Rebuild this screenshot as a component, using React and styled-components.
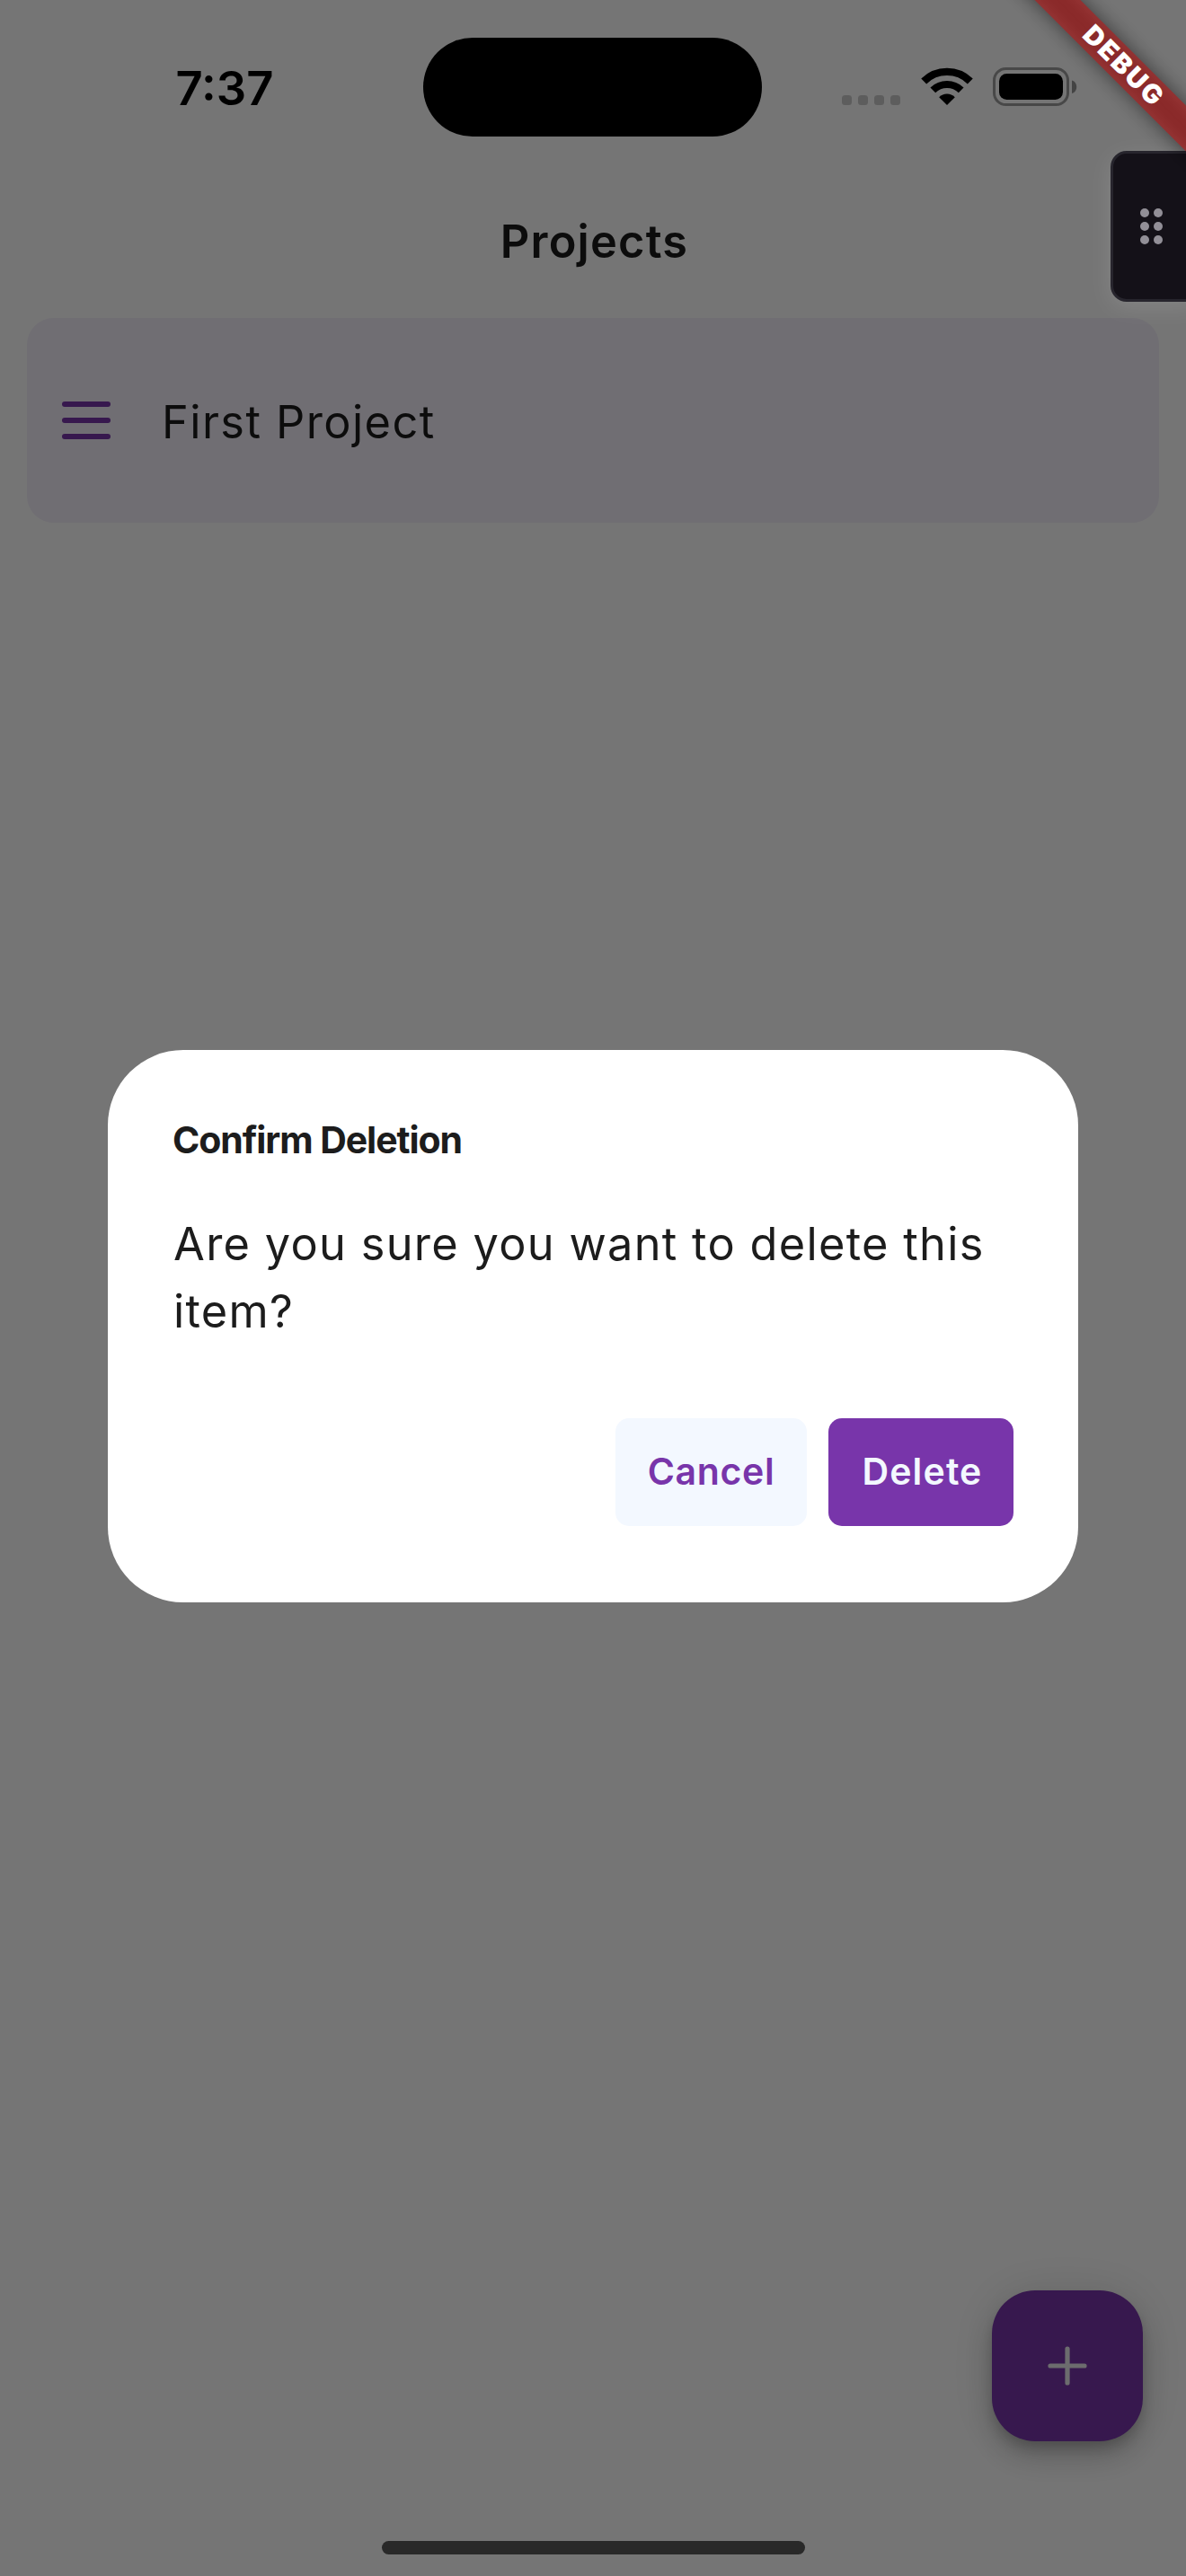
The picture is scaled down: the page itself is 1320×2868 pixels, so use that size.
import React from "react";
import styled, { createGlobalStyle } from "styled-components";

const GlobalStyle = createGlobalStyle`
  * { box-sizing: border-box; }
  body {
    margin: 0;
    background: #fff;
    font-family: Inter, "Liberation Sans", sans-serif;
    color: #1c1c1c;
  }
  button { font: inherit; border: 0; padding: 0; }
`;

const Screen = styled.main`
  position: relative;
  display: flex;
  flex-direction: column;
  width: 1320px;
  height: 2868px;
  overflow: hidden;
  background: #fff;
`;

const StatusSpacer = styled.div`
  height: 186px;
  flex: none;
`;

const AppBar = styled.header`
  display: flex;
  align-items: center;
  justify-content: center;
  height: 168px;
  padding: 0 0 3px 3px;
  flex: none;
`;

const AppTitle = styled.h1`
  margin: 0;
  font-size: 50.5px;
  font-weight: 600;
  line-height: 66px;
  letter-spacing: 1.2px;
`;

const ProjectList = styled.section`
  flex: 1;
  padding: 0 30px;
`;

const ProjectRow = styled.article`
  display: flex;
  align-items: center;
  gap: 57px;
  height: 228px;
  padding: 0 39px;
  border-radius: 30px;
  background: #f3effa;
`;

const MenuIcon = styled.span`
  display: flex;
  flex-direction: column;
  gap: 12px;
  width: 54px;
`;

const MenuBar = styled.i`
  height: 6px;
  border-radius: 3px;
  background: #7835aa;
`;

const ProjectName = styled.span`
  padding-top: 3px;
  font-size: 50.5px;
  line-height: 72px;
  letter-spacing: 1.42px;
`;

const BottomBar = styled.footer`
  display: flex;
  justify-content: flex-end;
  padding: 0 48px 150px;
`;

const AddButton = styled.button`
  display: grid;
  place-items: center;
  width: 168px;
  height: 168px;
  border-radius: 48px;
  background: #7835aa;
  color: #ececf0;
  box-shadow:
    0 9px 15px -3px rgba(0, 0, 0, 0.2),
    0 18px 30px rgba(0, 0, 0, 0.14),
    0 3px 54px rgba(0, 0, 0, 0.12);
`;

const Scrim = styled.div`
  position: absolute;
  inset: 0;
  display: flex;
  align-items: center;
  justify-content: center;
  padding-top: 84px;
  background: rgba(0, 0, 0, 0.54);
`;

const Dialog = styled.section`
  width: 1080px;
  height: 615px;
  padding: 72px 72px 0;
  border-radius: 84px;
  background: #fff;
`;

const DialogTitle = styled.h2`
  margin: 0 0 50.5px;
  font-size: 41px;
  font-weight: 700;
  line-height: 56px;
  letter-spacing: -1.08px;
`;

const DialogText = styled.p`
  margin: 0;
  padding-left: 1px;
  font-size: 50.5px;
  line-height: 75px;
  letter-spacing: 1.29px;
`;

const Actions = styled.div`
  display: flex;
  justify-content: flex-end;
  gap: 24px;
  margin-top: 82.3px;
`;

const ActionButton = styled.button`
  width: ${(p) => p.$width}px;
  height: 120px;
  padding: 0 0 3px ${(p) => (p.$primary ? 3 : 0)}px;
  border-radius: 15px;
  background: ${(p) => (p.$primary ? "#7835aa" : "#f3f8ff")};
  color: ${(p) => (p.$primary ? "#f3f8ff" : "#7835aa")};
  font-size: 41px;
  font-weight: 600;
  letter-spacing: ${(p) => (p.$primary ? 1.15 : 0.65)}px;
`;

const StatusBar = styled.div`
  position: absolute;
  inset: 0 0 auto;
  display: grid;
  grid-template-columns: 471px 377px 1fr;
  align-items: center;
  height: 194px;
  color: #000;
`;

const Clock = styled.time`
  padding: 1px 0 0 29px;
  text-align: center;
  font-size: 52.5px;
  font-weight: 600;
  line-height: 64px;
`;

const Island = styled.div`
  height: 110px;
  border-radius: 55px;
  background: #000;
`;

const StatusIcons = styled.div`
  display: flex;
  align-items: flex-start;
  height: 44px;
  padding-left: 89px;
`;

const SignalDots = styled.span`
  display: flex;
  gap: 7px;
  margin: 31px 23px 0 0;
`;

const SignalDot = styled.i`
  width: 11px;
  height: 11px;
  border-radius: 3.5px;
  background: #5d5d5d;
`;

const HomeIndicator = styled.div`
  position: absolute;
  left: 425px;
  bottom: 24px;
  width: 471px;
  height: 15px;
  border-radius: 8px;
  background: #292929;
`;

const DragTab = styled.aside`
  position: absolute;
  top: 168px;
  right: -18px;
  display: grid;
  grid-template-columns: 10px 10px;
  place-content: center;
  gap: 5px;
  width: 102px;
  height: 168px;
  padding-right: 12px;
  border: 3px solid #27252d;
  border-radius: 18px;
  background: #141118;
  box-shadow: 0 6px 26px rgba(255, 255, 255, 0.12);
`;

const GripDot = styled.i`
  width: 10px;
  height: 10px;
  border-radius: 50%;
  background: #928f97;
`;

const DebugRibbon = styled.div`
  position: absolute;
  top: 55px;
  right: -120px;
  width: 380px;
  height: 36px;
  transform: rotate(45deg);
  color: #fff;
  font-size: 29.5px;
  font-weight: 900;
  line-height: 34px;
  letter-spacing: 2.3px;
  text-align: center;

  &::before {
    content: "";
    position: absolute;
    inset: 0;
    background: rgba(0, 0, 0, 0.5);
    filter: blur(11px);
  }
`;

const RibbonLabel = styled.span`
  position: absolute;
  inset: 0;
  padding-left: 2px;
  background: rgba(183, 28, 28, 0.627);
`;

const WifiIcon = styled.svg.attrs({ width: 58, height: 43, viewBox: "0 0 58 43" })`
  margin-right: 22px;
  fill: none;
`;

const BatteryIcon = () => (
  <svg width="95" height="44" viewBox="0 0 95 44">
    <rect x="1.5" y="1.5" width="82" height="40" rx="13" fill="none" stroke="#484848" strokeWidth="3" />
    <rect x="7" y="7" width="71" height="29" rx="8.5" fill="#000" />
    <path d="M88 14.5c7 2 7 12.5 0 14.5z" fill="#444" />
  </svg>
);

const PlusIcon = () => (
  <svg width="44" height="44" viewBox="0 0 44 44" stroke="currentColor" strokeWidth="5.2" strokeLinecap="round">
    <path d="M22 3v38M3 22h38" />
  </svg>
);

export default function App() {
  return (
    <>
      <GlobalStyle />
      <Screen>
        <StatusSpacer />
        <AppBar>
          <AppTitle>Projects</AppTitle>
        </AppBar>
        <ProjectList>
          <ProjectRow>
            <MenuIcon>
              <MenuBar />
              <MenuBar />
              <MenuBar />
            </MenuIcon>
            <ProjectName>First Project</ProjectName>
          </ProjectRow>
        </ProjectList>
        <BottomBar>
          <AddButton aria-label="Add project">
            <PlusIcon />
          </AddButton>
        </BottomBar>

        <Scrim>
          <Dialog role="dialog">
            <DialogTitle>Confirm Deletion</DialogTitle>
            <DialogText>Are you sure you want to delete this item?</DialogText>
            <Actions>
              <ActionButton $width={213}>Cancel</ActionButton>
              <ActionButton $width={206} $primary>Delete</ActionButton>
            </Actions>
          </Dialog>
        </Scrim>

        <StatusBar>
          <Clock>7:37</Clock>
          <Island />
          <StatusIcons>
            <SignalDots>
              {[0, 1, 2, 3].map((n) => (
                <SignalDot key={n} />
              ))}
            </SignalDots>
            <WifiIcon>
              <path d="M3.2 15.4a36.8 36.8 0 0 1 51.6 0" stroke="#000" strokeWidth="8.4" />
              <path d="M13.3 25.4a22.5 22.5 0 0 1 31.4 0" stroke="#000" strokeWidth="8.2" />
              <path d="M29 42l-8.8-8.8a12.6 12.6 0 0 1 17.6 0z" fill="#000" />
            </WifiIcon>
            <BatteryIcon />
          </StatusIcons>
        </StatusBar>
        <HomeIndicator />
        <DragTab>
          {[0, 1, 2, 3, 4, 5].map((n) => (
            <GripDot key={n} />
          ))}
        </DragTab>
        <DebugRibbon>
          <RibbonLabel>DEBUG</RibbonLabel>
        </DebugRibbon>
      </Screen>
    </>
  );
}
